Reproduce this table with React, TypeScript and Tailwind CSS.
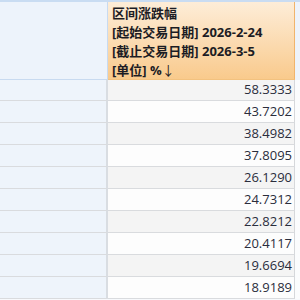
import React from 'react';

const values = ['58.3333', '43.7202', '38.4982', '37.8095', '26.1290', '24.7312', '22.8212', '20.4117', '19.6694', '18.9189'];

export default function App() {
  return (
    <div className="w-[300px] h-[300px] overflow-hidden bg-[#f7f9fc] font-['Noto_Sans_CJK_SC',sans-serif]">
      <div className="grid grid-cols-[108px_187px_5px] border-t-2 border-[#c9dcf2]">
        {/* header */}
        <div className="h-[78px] bg-[#edf3fb] border-r border-b border-[#c8daf0]" />
        <div className="h-[78px] bg-gradient-to-b from-[#fdedd8] to-[#f9ca8c] border-r border-[#f1b46b] border-b border-b-[#f3c27f] pl-[4px] pt-[2px] text-[13px] leading-[19px] font-bold text-[#1c1c24] whitespace-nowrap font-['Open_Sans','Noto_Sans_CJK_SC',sans-serif]">
          <div>区间涨跌幅</div>
          <div>[起始交易日期] 2026-2-24</div>
          <div>[截止交易日期] 2026-3-5</div>
          <div>[单位] %<span className="font-normal">↓</span></div>
        </div>
        <div className="h-[78px] bg-[#eef3fa]" />

        {values.map((v, i) => (
          <React.Fragment key={v}>
            <div className={`${i === 0 ? 'h-[21px]' : 'h-[22px]'} bg-[#eef4fb] border-r-2 border-r-[#d9dde2] border-b border-b-[#d9dbde]`} />
            <div
              className={`${i === 0 ? 'h-[21px]' : 'h-[22px]'} ${i % 2 === 0 ? 'bg-[#f4f4f4]' : 'bg-[#fdfdfd]'} border-r border-r-[#d6d8db] border-b border-b-[#d9dbde] flex items-center justify-end pr-[2px] text-[13px] text-[#2a2d3c] font-['Open_Sans',sans-serif]`}
            >
              {v}
            </div>
            <div className={`${i === 0 ? 'h-[21px]' : 'h-[22px]'} bg-[#fbfcfd]`} />
          </React.Fragment>
        ))}
      </div>
    </div>
  );
}
